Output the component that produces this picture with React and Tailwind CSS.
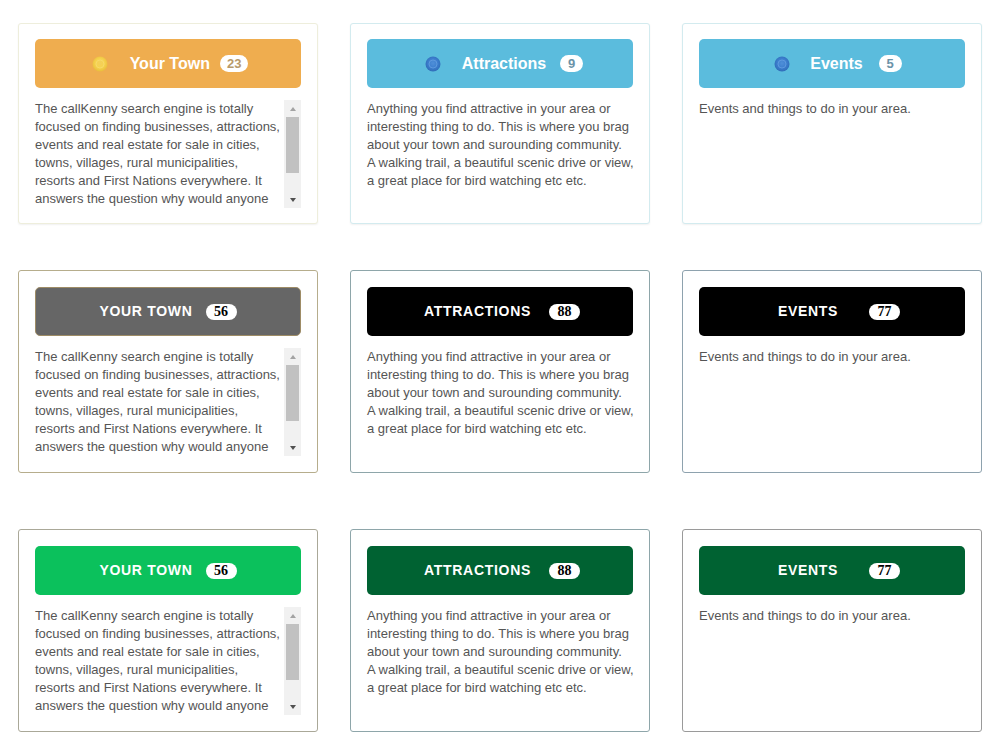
import React from "react";

// line breaks follow the reference widget exactly (only the visible part of the scroll box)
const townLines = [
    "The callKenny search engine is totally",
    "focused on finding businesses, attractions,",
    "events and real estate for sale in cities,",
    "towns, villages, rural municipalities,",
    "resorts and First Nations everywhere. It",
    "answers the question why would anyone",
];
const attractionsLines = [
    "Anything you find attractive in your area or",
    "interesting thing to do. This is where you brag",
    "about your town and surounding community.",
    "A walking trail, a beautiful scenic drive or view,",
    "a great place for bird watching etc etc.",
];
const eventsLines = ["Events and things to do in your area."];

const Dot = ({ tone }) => {
    const yellow = tone === "yellow";
    const id = yellow ? "dotY" : "dotB";
    const size = yellow ? 16 : 16;
    return (
        <svg width={size} height={size} viewBox="0 0 16 16" className="shrink-0">
            <defs>
                <radialGradient id={id} cx="50%" cy="45%" r="55%">
                    <stop offset="0%" stopColor={yellow ? "#f3cf5c" : "#4f8fd8"} />
                    <stop offset="55%" stopColor={yellow ? "#f6d34e" : "#3d7fcf"} />
                    <stop offset="100%" stopColor={yellow ? "#e9bd3c" : "#2f6cb8"} />
                </radialGradient>
            </defs>
            <circle cx="8" cy="8" r="7.5" fill={`url(#${id})`} />
            <circle cx="8" cy="8" r="4" fill="none" stroke={yellow ? "#f8dc73" : "#6aa2e2"} strokeWidth="1" opacity="0.7" />
        </svg>
    );
};

const FakeScroll = () => (
    <div className="w-[17px] h-full bg-[#f1f1f1] flex flex-col shrink-0">
        <div className="h-[17px] flex items-center justify-center">
            <div className="w-0 h-0 border-l-[3.5px] border-r-[3.5px] border-b-[4px] border-l-transparent border-r-transparent border-b-[#a3a3a3]" />
        </div>
        <div className="mx-[2px] h-[56px] bg-[#c1c1c1]" />
        <div className="flex-1" />
        <div className="h-[17px] flex items-center justify-center">
            <div className="w-0 h-0 border-l-[3.5px] border-r-[3.5px] border-t-[4px] border-l-transparent border-r-transparent border-t-[#505050]" />
        </div>
    </div>
);

const Lines = ({ lines }) => (
    <>
        {lines.map((l, i) => (
            <div key={i} className="whitespace-nowrap">{l}</div>
        ))}
    </>
);

const Body = ({ lines, scroll }) =>
    scroll ? (
        <div className="mt-[12px] h-[108px] flex">
            <div className="flex-1 text-[13px] leading-[18px] text-[#555]">
                <Lines lines={lines} />
            </div>
            <FakeScroll />
        </div>
    ) : (
        <div className="mt-[12px] text-[13px] leading-[18px] text-[#555]">
            <Lines lines={lines} />
        </div>
    );

// first row: bootstrap-ish buttons with dot + badge
const RoundCard = ({ border, bg, label, count, tone, badgeText, shift, gapA, gapB, lines, scroll }) => (
    <div className={`w-[300px] h-[201px] border ${border} rounded-[3px] bg-white px-[16px] pt-[15px] shadow-[0_1px_2px_rgba(0,0,0,0.06)]`}>
        <div className={`h-[49px] rounded-[5px] ${bg} flex items-center justify-center ${shift}`}>
            <Dot tone={tone} />
            <span className={`${gapA} text-[16px] font-bold text-white`}>{label}</span>
            <span className={`${gapB} h-[17px] min-w-[23px] px-[7px] rounded-full bg-white flex items-center justify-center text-[13px] font-bold ${badgeText}`}>
                {count}
            </span>
        </div>
        <Body lines={lines} scroll={scroll} />
    </div>
);

// rows 2 and 3: uppercase headers
const BlockCard = ({ border, bg, label, count, gap, shift, lines, scroll }) => (
    <div className={`w-[300px] h-[203px] border ${border} rounded-[3px] bg-white px-[16px] pt-[16px]`}>
        <div className={`h-[49px] rounded-[5px] ${bg} flex items-center justify-center ${shift}`}>
            <span className="text-[14px] font-bold tracking-[0.7px] text-white">{label}</span>
            <span className={`${gap} h-[16px] w-[31px] rounded-full bg-white flex items-center justify-center text-black text-[14px] font-semibold`} style={{ fontFamily: '"Liberation Serif", serif' }}>
                {count}
            </span>
        </div>
        <Body lines={lines} scroll={scroll} />
    </div>
);

export default function App() {
    return (
        <div className="min-h-screen bg-white pl-[18px] pt-[23px]" style={{ fontFamily: '"Liberation Sans", Arial, sans-serif' }}>
            <div className="flex gap-[32px]">
                <RoundCard border="border-[#eeeedc]" bg="bg-[#efad4f]" label="Your Town" count="23" tone="yellow" badgeText="text-[#b89a6a]" shift="pl-[4px]" gapA="ml-[22px]" gapB="ml-[10px]" lines={townLines} scroll />
                <RoundCard border="border-[#d3ebef]" bg="bg-[#5bbcdd]" label="Attractions" count="9" tone="blue" badgeText="text-[#6b93a8]" shift="pl-[8px]" gapA="ml-[21px]" gapB="ml-[14px]" lines={attractionsLines} />
                <RoundCard border="border-[#d3ebef]" bg="bg-[#5bbcdd]" label="Events" count="5" tone="blue" badgeText="text-[#6b93a8]" shift="pl-[12px]" gapA="ml-[20px]" gapB="ml-[16px]" lines={eventsLines} />
            </div>

            <div className="flex gap-[32px] mt-[46px]">
                <BlockCard border="border-[#b6ad8c]" bg="bg-[#666666] border border-[#9e8c66]" label="YOUR TOWN" count="56" gap="ml-[13px]" shift="" lines={townLines} scroll />
                <BlockCard border="border-[#8ea6aa]" bg="bg-black" label="ATTRACTIONS" count="88" gap="ml-[18px]" shift="pl-[4px]" lines={attractionsLines} />
                <BlockCard border="border-[#8ea2ae]" bg="bg-black" label="EVENTS" count="77" gap="ml-[31px]" shift="pl-[14px]" lines={eventsLines} />
            </div>

            <div className="flex gap-[32px] mt-[56px]">
                <BlockCard border="border-[#aaa898]" bg="bg-[#0bc15c]" label="YOUR TOWN" count="56" gap="ml-[13px]" shift="" lines={townLines} scroll />
                <BlockCard border="border-[#8ea6aa]" bg="bg-[#006232]" label="ATTRACTIONS" count="88" gap="ml-[18px]" shift="pl-[4px]" lines={attractionsLines} />
                <BlockCard border="border-[#9a9a9a]" bg="bg-[#006232]" label="EVENTS" count="77" gap="ml-[31px]" shift="pl-[14px]" lines={eventsLines} />
            </div>
        </div>
    );
}
